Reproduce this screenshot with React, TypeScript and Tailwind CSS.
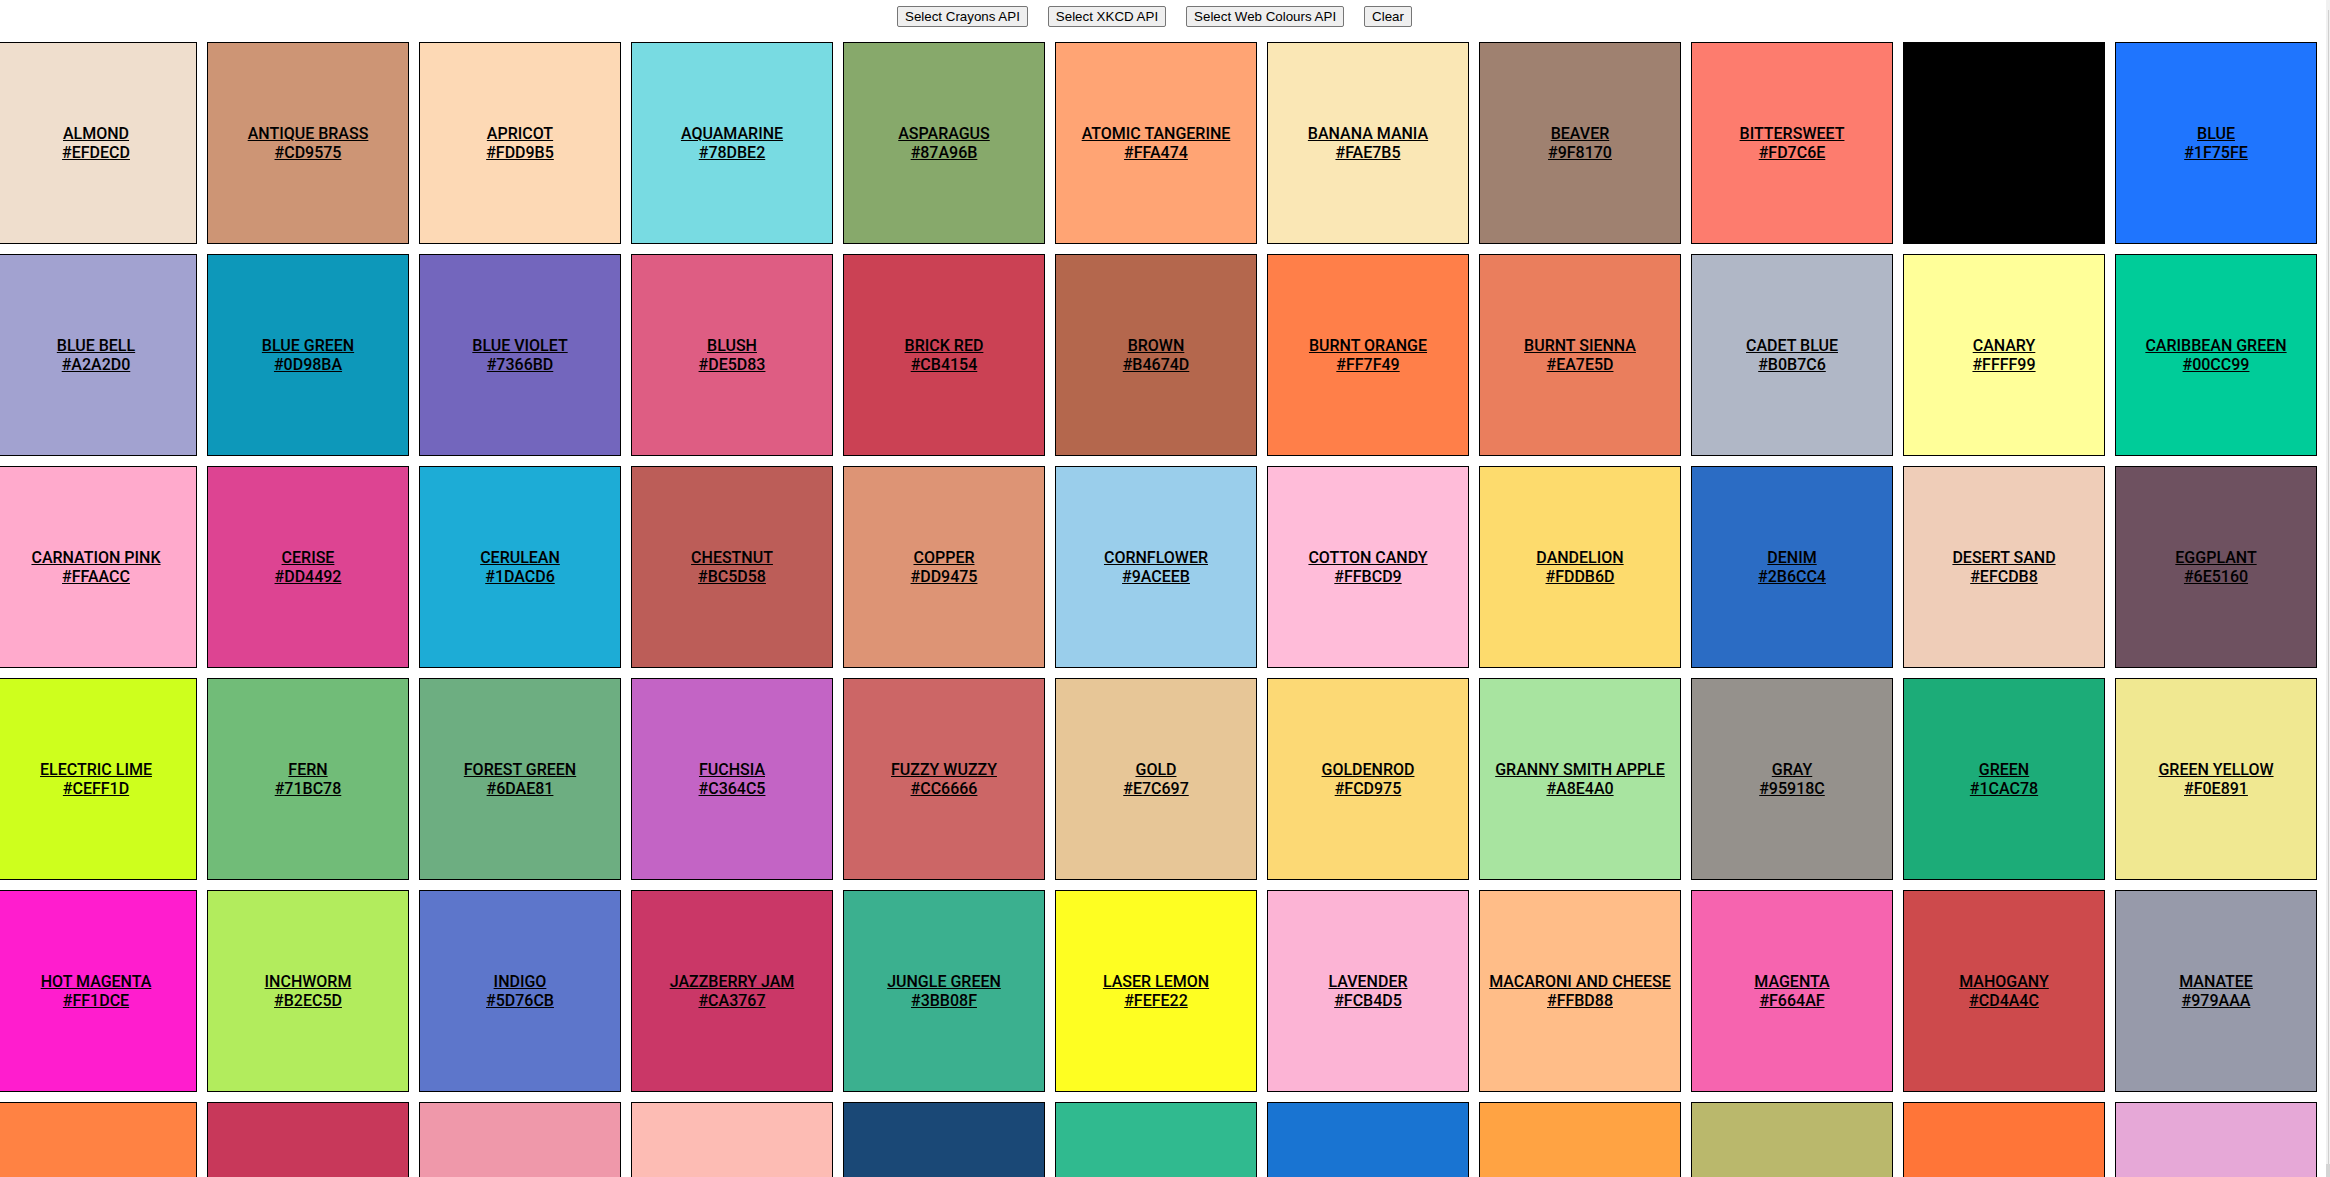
import React from 'react';

const crayons: [string, string][] = [
  ['Almond', '#EFDECD'],
  ['Antique Brass', '#CD9575'],
  ['Apricot', '#FDD9B5'],
  ['Aquamarine', '#78DBE2'],
  ['Asparagus', '#87A96B'],
  ['Atomic Tangerine', '#FFA474'],
  ['Banana Mania', '#FAE7B5'],
  ['Beaver', '#9F8170'],
  ['Bittersweet', '#FD7C6E'],
  ['Black', '#000000'],
  ['Blue', '#1F75FE'],
  ['Blue Bell', '#A2A2D0'],
  ['Blue Green', '#0D98BA'],
  ['Blue Violet', '#7366BD'],
  ['Blush', '#DE5D83'],
  ['Brick Red', '#CB4154'],
  ['Brown', '#B4674D'],
  ['Burnt Orange', '#FF7F49'],
  ['Burnt Sienna', '#EA7E5D'],
  ['Cadet Blue', '#B0B7C6'],
  ['Canary', '#FFFF99'],
  ['Caribbean Green', '#00CC99'],
  ['Carnation Pink', '#FFAACC'],
  ['Cerise', '#DD4492'],
  ['Cerulean', '#1DACD6'],
  ['Chestnut', '#BC5D58'],
  ['Copper', '#DD9475'],
  ['Cornflower', '#9ACEEB'],
  ['Cotton Candy', '#FFBCD9'],
  ['Dandelion', '#FDDB6D'],
  ['Denim', '#2B6CC4'],
  ['Desert Sand', '#EFCDB8'],
  ['Eggplant', '#6E5160'],
  ['Electric Lime', '#CEFF1D'],
  ['Fern', '#71BC78'],
  ['Forest Green', '#6DAE81'],
  ['Fuchsia', '#C364C5'],
  ['Fuzzy Wuzzy', '#CC6666'],
  ['Gold', '#E7C697'],
  ['Goldenrod', '#FCD975'],
  ['Granny Smith Apple', '#A8E4A0'],
  ['Gray', '#95918C'],
  ['Green', '#1CAC78'],
  ['Green Yellow', '#F0E891'],
  ['Hot Magenta', '#FF1DCE'],
  ['Inchworm', '#B2EC5D'],
  ['Indigo', '#5D76CB'],
  ['Jazzberry Jam', '#CA3767'],
  ['Jungle Green', '#3BB08F'],
  ['Laser Lemon', '#FEFE22'],
  ['Lavender', '#FCB4D5'],
  ['Macaroni and Cheese', '#FFBD88'],
  ['Magenta', '#F664AF'],
  ['Mahogany', '#CD4A4C'],
  ['Manatee', '#979AAA'],
  ['Mango Tango', '#FF8243'],
  ['Maroon', '#C8385A'],
  ['Mauvelous', '#EF98AA'],
  ['Melon', '#FDBCB4'],
  ['Midnight Blue', '#1A4876'],
  ['Mountain Meadow', '#30BA8F'],
  ['Navy Blue', '#1974D2'],
  ['Neon Carrot', '#FFA343'],
  ['Olive Green', '#BAB86C'],
  ['Orange', '#FF7538'],
  ['Orchid', '#E6A8D7'],
];

const buttons = ['Select Crayons API', 'Select XKCD API', 'Select Web Colours API', 'Clear'];

export default function App() {
  return (
    <div className="flex h-[1177px] w-[2330px] overflow-hidden bg-white">
      <div className="flex-1 min-w-0 flex flex-col">
        <div className="h-[42px] pt-[6px] pr-[17px] flex items-start justify-center gap-[20px] shrink-0">
          {buttons.map((b) => (
            <button
              key={b}
              className="px-[7px] py-[2px] bg-[#efefef] border border-[#767676] rounded-[2px] text-[13.333px] leading-[normal] text-black font-['Liberation_Sans',Arial,sans-serif]"
            >
              {b}
            </button>
          ))}
        </div>
        <div className="-ml-[5px] grid grid-cols-[repeat(11,202px)] gap-[10px]">
          {crayons.map(([name, hex]) => (
            <div
              key={name}
              className="h-[202px] border border-black flex items-center justify-center text-center"
              style={{ backgroundColor: hex }}
            >
              <a className="text-black underline text-[16px] leading-[normal] font-medium font-['Roboto',sans-serif]">
                {name.toUpperCase()}
                <br />
                {hex}
              </a>
            </div>
          ))}
        </div>
      </div>
      {/* sliver of the page scrollbar */}
      <div className="w-[4px] shrink-0 bg-[#f1f1f1] flex flex-col">
        <div className="ml-[2px] mt-[10px] w-[1px] flex-1 bg-[#cfcfcf]" />
        <div className="h-[13px] bg-[#d4d4d4]" />
      </div>
    </div>
  );
}
